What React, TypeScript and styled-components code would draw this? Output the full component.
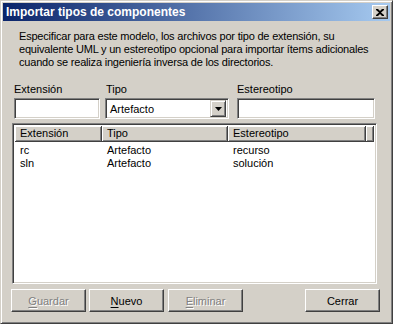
import React from "react";
import styled, { createGlobalStyle } from "styled-components";

const GlobalStyle = createGlobalStyle`
  html, body {
    margin: 0;
    padding: 0;
    background: #ffffff;
  }
  body {
    font-family: "Liberation Sans", Arial, sans-serif;
    font-size: 11px;
  }
`;

const face = "#D4D0C8";
const shadow = "#808080";
const darkShadow = "#404040";

const Window = styled.div`
  width: 393px;
  height: 324px;
  box-sizing: border-box;
  background: ${face};
  border: 1px solid;
  border-color: ${face} ${darkShadow} ${darkShadow} ${face};
  box-shadow: inset 1px 1px #fff, inset -1px -1px ${shadow};
  padding: 2px;
  display: flex;
  flex-direction: column;
  color: #000;
  font-family: "Liberation Sans", Arial, sans-serif;
  font-size: 11px;
`;

const TitleBar = styled.div`
  height: 18px;
  display: flex;
  align-items: center;
  justify-content: space-between;
  padding: 0 2px 0 3px;
  background: linear-gradient(to right, #0a246a, #a6caf0);
`;

const TitleText = styled.span`
  color: #fff;
  font-weight: bold;
  font-size: 12px;
`;

const CloseButton = styled.div`
  width: 16px;
  height: 14px;
  box-sizing: border-box;
  background: ${face};
  border: 1px solid;
  border-color: #fff ${darkShadow} ${darkShadow} #fff;
  box-shadow: inset -1px -1px ${shadow};
  display: flex;
  align-items: center;
  justify-content: center;
`;

const Description = styled.p`
  margin: 9px 0 0 16px;
  line-height: 13px;
  letter-spacing: -0.2px;
`;

const FieldRow = styled.div`
  display: flex;
  margin: 14px 0 0 11px;
`;

const Field = styled.div<{ $w: number; $ml?: number }>`
  width: ${(p) => p.$w}px;
  margin-left: ${(p) => p.$ml ?? 0}px;
  display: flex;
  flex-direction: column;
`;

const Label = styled.label<{ $indent?: number }>`
  line-height: 13px;
  height: 15px;
  padding-left: ${(p) => p.$indent ?? 0}px;
`;

const Sunken = styled.div`
  height: 21px;
  box-sizing: border-box;
  background: #fff;
  border: 1px solid;
  border-color: ${shadow} #fff #fff ${shadow};
  box-shadow: inset 1px 1px ${darkShadow}, inset -1px -1px ${face};
  display: flex;
  align-items: center;
  padding: 2px;
`;

const SelectText = styled.span`
  flex: 1;
  padding-left: 2px;
`;

const DropButton = styled.div`
  width: 16px;
  height: 17px;
  box-sizing: border-box;
  background: ${face};
  border: 1px solid;
  border-color: ${face} ${darkShadow} ${darkShadow} ${face};
  box-shadow: inset 1px 1px #fff, inset -1px -1px ${shadow};
  display: flex;
  align-items: center;
  justify-content: center;
`;

const ListBox = styled.div`
  margin: 4px 0 0 9px;
  width: 365px;
  height: 161px;
  box-sizing: border-box;
  background: #fff;
  border: 1px solid;
  border-color: ${shadow} #fff #fff ${shadow};
  box-shadow: inset 1px 1px ${darkShadow}, inset -1px -1px ${face};
  padding: 2px;
`;

const cols = "87px 126px 138px 1fr";

const HeaderRow = styled.div`
  display: grid;
  grid-template-columns: ${cols};
  height: 16px;
`;

const HeaderCell = styled.div`
  box-sizing: border-box;
  background: ${face};
  border-right: 1px solid ${darkShadow};
  border-bottom: 1px solid ${darkShadow};
  box-shadow: inset 1px 1px #fff, inset -1px -1px ${shadow};
  padding-left: 5px;
  line-height: 15px;
  white-space: nowrap;
  overflow: hidden;
`;

const Rows = styled.div`
  padding-top: 2px;
`;

const Row = styled.div`
  display: grid;
  grid-template-columns: ${cols};
  height: 13px;
  line-height: 13px;
`;

const Cell = styled.div`
  padding-left: 5px;
  white-space: nowrap;
`;

const ButtonRow = styled.div`
  display: flex;
  margin: 5px 0 0 8px;
`;

const Button = styled.div<{ $ml?: number; $disabled?: boolean }>`
  width: 75px;
  height: 23px;
  box-sizing: border-box;
  margin-left: ${(p) => p.$ml ?? 0}px;
  background: ${face};
  border: 1px solid;
  border-color: #fff ${darkShadow} ${darkShadow} #fff;
  box-shadow: inset -1px -1px ${shadow};
  display: flex;
  align-items: center;
  justify-content: center;
  color: ${(p) => (p.$disabled ? shadow : "#000")};
  text-shadow: ${(p) => (p.$disabled ? "1px 1px #fff" : "none")};

  u {
    text-decoration-thickness: 1px;
    text-underline-offset: 2px;
  }
`;

const rows = [
  { ext: "rc", tipo: "Artefacto", est: "recurso" },
  { ext: "sln", tipo: "Artefacto", est: "solución" },
];

const App: React.FC = () => {
  return (
    <>
      <GlobalStyle />
      <Window>
        <TitleBar>
          <TitleText>Importar tipos de componentes</TitleText>
          <CloseButton>
            <svg width="8" height="7" viewBox="0 0 8 7">
              <path d="M0 0h2l2 2 2-2h2v1L5 3.5 8 6v1H6L4 5 2 7H0V6l3-2.5L0 1z" fill="#000" />
            </svg>
          </CloseButton>
        </TitleBar>
        <Description>
          Especificar para este modelo, los archivos por tipo de extensión, su
          <br />
          equivalente UML y un estereotipo opcional para importar ítems adicionales
          <br />
          cuando se realiza ingeniería inversa de los directorios.
        </Description>
        <FieldRow>
          <Field $w={86}>
            <Label>Extensión</Label>
            <Sunken />
          </Field>
          <Field $w={124} $ml={5}>
            <Label $indent={1}>Tipo</Label>
            <Sunken>
              <SelectText>Artefacto</SelectText>
              <DropButton>
                <svg width="7" height="4" viewBox="0 0 7 4">
                  <path d="M0 0h7L3.5 4z" fill="#000" />
                </svg>
              </DropButton>
            </Sunken>
          </Field>
          <Field $w={138} $ml={8}>
            <Label>Estereotipo</Label>
            <Sunken />
          </Field>
        </FieldRow>
        <ListBox>
          <HeaderRow>
            <HeaderCell>Extensión</HeaderCell>
            <HeaderCell>Tipo</HeaderCell>
            <HeaderCell>Estereotipo</HeaderCell>
            <HeaderCell />
          </HeaderRow>
          <Rows>
            {rows.map((r) => (
              <Row key={r.ext}>
                <Cell>{r.ext}</Cell>
                <Cell>{r.tipo}</Cell>
                <Cell>{r.est}</Cell>
                <Cell />
              </Row>
            ))}
          </Rows>
        </ListBox>
        <ButtonRow>
          <Button $disabled>
            <span>
              <u>G</u>uardar
            </span>
          </Button>
          <Button $ml={3}>
            <span>
              <u>N</u>uevo
            </span>
          </Button>
          <Button $ml={4} $disabled>
            <span>
              <u>E</u>liminar
            </span>
          </Button>
          <Button $ml={62}>Cerrar</Button>
        </ButtonRow>
      </Window>
    </>
  );
};

export default App;
